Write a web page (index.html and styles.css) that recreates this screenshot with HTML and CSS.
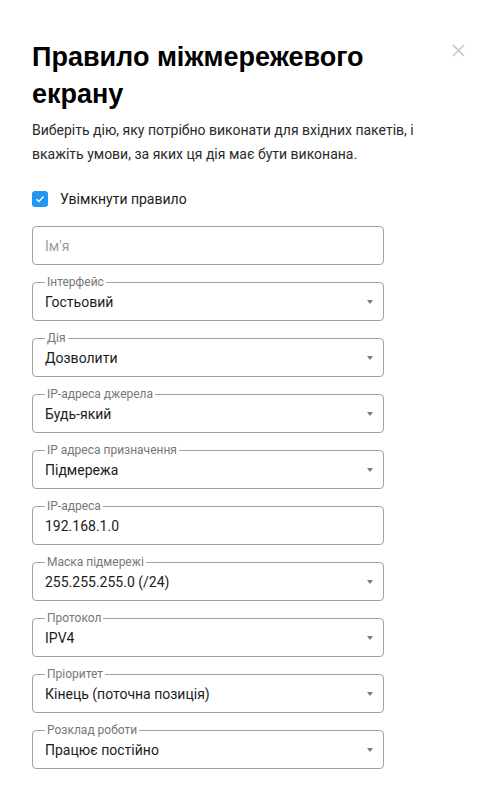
FILE: index.html
```html
<!DOCTYPE html>
<html lang="uk">
<head>
<meta charset="utf-8">
<title>Правило міжмережевого екрану</title>
<link rel="stylesheet" href="styles.css">
</head>
<body>
<div class="dialog">
  <div class="header">
    <h1 class="title">Правило міжмережевого екрану</h1>
    <button class="close" aria-label="Закрити">
      <svg width="13" height="13" viewBox="0 0 13 13"><path d="M1 1L12 12M12 1L1 12" stroke="#c4c4c4" stroke-width="1.5" fill="none"/></svg>
    </button>
  </div>
  <p class="desc">Виберіть дію, яку потрібно виконати для вхідних пакетів, і вкажіть умови, за яких ця дія має бути виконана.</p>

  <label class="check">
    <svg class="box" width="16" height="16" viewBox="0 0 16 16"><rect width="16" height="16" rx="3" fill="#2196f3"/><path d="M4.4 8.2L6.9 10.6L11.6 5.6" stroke="#fff" stroke-width="1.4" fill="none"/></svg>
    <span>Увімкнути правило</span>
  </label>

  <div class="fields">
    <div class="field"><span class="placeholder">Ім'я</span></div>
    <div class="field"><span class="label">Інтерфейс</span><span class="value">Гостьовий</span><span class="arrow"></span></div>
    <div class="field"><span class="label">Дія</span><span class="value">Дозволити</span><span class="arrow"></span></div>
    <div class="field"><span class="label">IP-адреса джерела</span><span class="value">Будь-який</span><span class="arrow"></span></div>
    <div class="field"><span class="label">IP адреса призначення</span><span class="value">Підмережа</span><span class="arrow"></span></div>
    <div class="field"><span class="label">IP-адреса</span><span class="value">192.168.1.0</span></div>
    <div class="field"><span class="label">Маска підмережі</span><span class="value">255.255.255.0 (/24)</span><span class="arrow"></span></div>
    <div class="field"><span class="label">Протокол</span><span class="value">IPV4</span><span class="arrow"></span></div>
    <div class="field"><span class="label">Пріоритет</span><span class="value">Кінець (поточна позиція)</span><span class="arrow"></span></div>
    <div class="field"><span class="label">Розклад роботи</span><span class="value">Працює постійно</span><span class="arrow"></span></div>
  </div>
</div>
</body>
</html>
```

FILE: styles.css
```css
* { box-sizing: border-box; }
html, body { margin: 0; padding: 0; background: #fff; }
body {
  font-family: Roboto, "Noto Sans", "Liberation Sans", sans-serif;
  color: #212121;
}
.dialog {
  padding: 39px 32px 0 32px;
}
.header {
  display: flex;
  align-items: flex-start;
}
.title {
  margin: 0;
  width: 400px;
  font-family: "Liberation Sans", Arial, sans-serif;
  font-size: 27px;
  font-weight: 700;
  line-height: 36.5px;
  color: #000;
}
.close {
  margin: 5px 0 0 20px;
  padding: 0;
  border: 0;
  background: none;
  width: 13px;
  height: 13px;
  display: block;
}
.close svg { display: block; }
.desc {
  margin: 6px 0 0 0;
  width: 400px;
  font-size: 14px;
  line-height: 24px;
  color: #2a2a2a;
}
.check {
  display: flex;
  align-items: center;
  gap: 12px;
  margin-top: 25px;
  font-size: 14px;
  color: #212121;
}
.check .box { display: block; flex: none; }
.fields {
  margin-top: 19px;
  display: flex;
  flex-direction: column;
  gap: 17px;
  width: 352px;
}
.field {
  position: relative;
  height: 39px;
  border: 1px solid #a3a3a3;
  border-radius: 4px;
  display: flex;
  align-items: center;
  padding: 0 10px 0 12px;
  font-size: 14px;
}
.placeholder { color: #9e9e9e; flex: 1; }
.value { flex: 1; color: #1c1c1c; }
.label {
  position: absolute;
  top: -7px;
  left: 12px;
  padding: 0 2px;
  background: #fff;
  font-size: 12px;
  line-height: 12px;
  color: #777;
}
.arrow {
  width: 0;
  height: 0;
  border-left: 3.5px solid transparent;
  border-right: 3.5px solid transparent;
  border-top: 4px solid #777;
}
```
